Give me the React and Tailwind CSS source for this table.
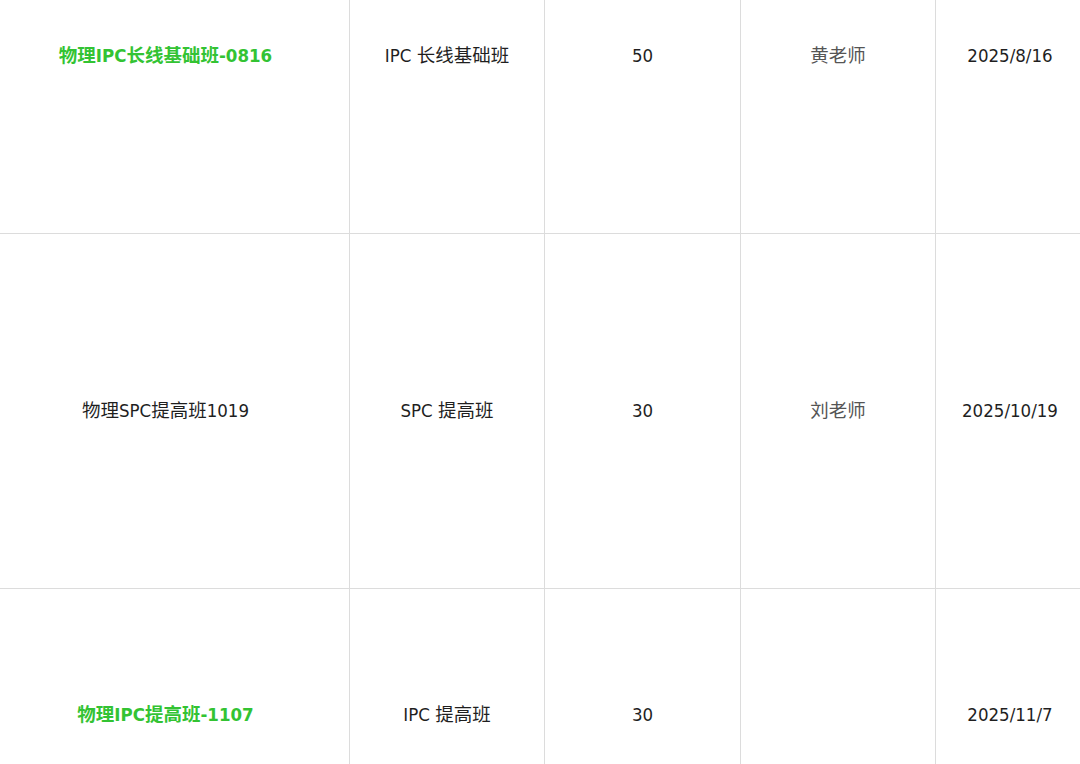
import React from "react";

const rows = [
  { name: "物理IPC长线基础班-0816", green: true, course: "IPC 长线基础班", n: "50", teacher: "黄老师", date: "2025/8/16", h: "h-[355px]" },
  { name: "物理SPC提高班1019", green: false, course: "SPC 提高班", n: "30", teacher: "刘老师", date: "2025/10/19", h: "h-[355px]" },
  { name: "物理IPC提高班-1107", green: true, course: "IPC 提高班", n: "30", teacher: "", date: "2025/11/7", h: "h-[252px]" },
];

export default function App() {
  return (
    <div className="h-[764px] w-[1080px] overflow-hidden bg-white font-['DejaVu_Sans_Condensed','Noto_Sans_CJK_SC',sans-serif] text-[18.5px] text-[#1f1f1f]">
      <div className="-mt-[121px] flex flex-col">
        {rows.map((r, i) => (
          <div key={i} className={`flex ${r.h} ${i < rows.length - 1 ? "border-b border-[#dcdcdc]" : ""}`}>
            <div className="flex w-[350px] shrink-0 items-center justify-center border-r border-[#dcdcdc] pr-[18px]">
              {r.green ? (
                <span className="font-bold text-[#33c333]">{r.name}</span>
              ) : (
                <span>{r.name}</span>
              )}
            </div>
            <div className="flex w-[195px] shrink-0 items-center justify-center border-r border-[#dcdcdc]">{r.course}</div>
            <div className="flex w-[196px] shrink-0 items-center justify-center border-r border-[#dcdcdc]">{r.n}</div>
            <div className="flex w-[195px] shrink-0 items-center justify-center border-r border-[#dcdcdc] text-[#555555]">{r.teacher}</div>
            <div className="flex w-[148px] shrink-0 items-center justify-center">{r.date}</div>
          </div>
        ))}
      </div>
    </div>
  );
}
